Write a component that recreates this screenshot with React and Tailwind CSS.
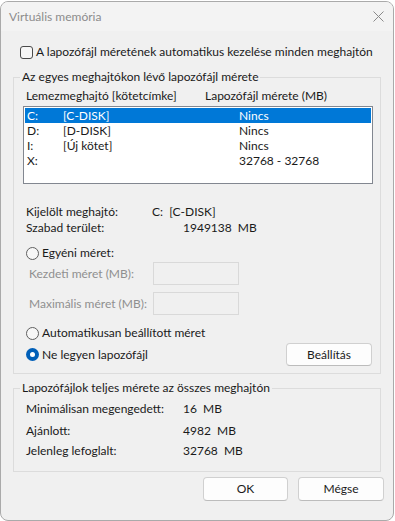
import React from "react";

function Radio({ checked }) {
  return checked ? (
    <span className="w-[13px] h-[13px] rounded-full bg-[#005fb8] flex items-center justify-center shrink-0">
      <span className="w-[5px] h-[5px] rounded-full bg-white" />
    </span>
  ) : (
    <span className="w-[13px] h-[13px] rounded-full border border-[#5f5f5f] bg-[#f7f7f7] shrink-0" />
  );
}

function Btn({ children, w }) {
  return (
    <div className={`h-[24px] ${w} rounded-[4px] border border-[#d0d0d0] border-b-[#bcbcbc] bg-[#fdfdfd] flex items-center justify-center text-[#1b1b1b]`}>
      {children}
    </div>
  );
}

export default function App() {
  const rows = [
    ["C:", "[C-DISK]", "Nincs", true],
    ["D:", "[D-DISK]", "Nincs", false],
    ["I:", "[Új kötet]", "Nincs", false],
    ["X:", "", "32768 - 32768", false],
  ];
  return (
    <div
      className="w-[395px] h-[521px] bg-white overflow-hidden text-[12px] leading-[16px] text-[#1a1a1a] whitespace-nowrap"
      style={{ fontFamily: 'Lato, "Noto Sans", sans-serif' }}
    >
      <div className="w-[394px] h-[520px] mt-[1px] rounded-[8px] border border-[#aaaaaa] bg-[#f0f0f0] overflow-hidden flex flex-col">
        <div className="h-[29px] bg-[#f3f3f3] flex items-center justify-between pl-[8px] pr-[9px]">
          <span className="text-[#8c8c8c]">Virtuális memória</span>
          <svg width="11" height="11" viewBox="0 0 11 11" className="mb-[1px]">
            <path d="M0.5 0.5 L10.5 10.5 M10.5 0.5 L0.5 10.5" stroke="#8a8a8a" strokeWidth="1" />
          </svg>
        </div>
        <div className="flex items-center gap-[3px] ml-[19px] mt-[13px] h-[16px]">
          <span className="w-[13px] h-[13px] rounded-[3px] border border-[#4a4a4a] bg-[#f7f7f7]" />
          <span>A lapozófájl méretének automatikus kezelése minden meghajtón</span>
        </div>
        <fieldset className="ml-[12px] w-[368px] mt-[9px] border border-[#dcdcdc] pb-[7px]">
          <legend className="ml-[6px] px-[2px]">Az egyes meghajtókon lévő lapozófájl mérete</legend>
          <div className="flex ml-[12px] mt-[3px] h-[16px]">
            <span className="w-[179px]">Lemezmeghajtó [kötetcímke]</span>
            <span>Lapozófájl mérete (MB)</span>
          </div>
          <div className="ml-[9px] w-[350px] h-[78px] mt-[2px] border border-[#828790] bg-white p-[1px] leading-[15px]">
            {rows.map(([d, l, s, sel]) => (
              <div
                key={d}
                className={`h-[15px] flex items-center ${sel ? "bg-[#0078d7] text-white" : ""}`}
              >
                <span className="w-[38px] pl-[2px]">{d}</span>
                <span className="w-[176px]">{l}</span>
                <span>{s}</span>
              </div>
            ))}
          </div>
          <div className="flex ml-[12px] mt-[20px] h-[16px]">
            <span className="w-[126px]">Kijelölt meghajtó:</span>
            <span>C:&nbsp; [C-DISK]</span>
          </div>
          <div className="flex ml-[12px] h-[16px]">
            <span className="w-[157px]">Szabad terület:</span>
            <span>1949138&nbsp; MB</span>
          </div>
          <div className="flex items-center gap-[3px] ml-[12px] mt-[9px] h-[16px]">
            <Radio />
            <span>Egyéni méret:</span>
          </div>
          <div className="flex items-center ml-[15px] mt-[1px] h-[23px]">
            <span className="w-[124px] text-[#8f8f8f]">Kezdeti méret (MB):</span>
            <span className="w-[86px] h-[23px] border border-[#d9d9d9] bg-[#f0f0f0]" />
          </div>
          <div className="flex items-center ml-[15px] mt-[7px] h-[23px]">
            <span className="w-[124px] text-[#8f8f8f]">Maximális méret (MB):</span>
            <span className="w-[86px] h-[23px] border border-[#d9d9d9] bg-[#f0f0f0]" />
          </div>
          <div className="flex items-center gap-[3px] ml-[12px] mt-[10px] h-[16px]">
            <Radio />
            <span>Automatikusan beállított méret</span>
          </div>
          <div className="flex items-center justify-between ml-[12px] mr-[8px] mt-[2px] h-[23px]">
            <div className="flex items-center gap-[3px]">
              <Radio checked />
              <span>Ne legyen lapozófájl</span>
            </div>
            <div className="h-[23px] w-[86px] rounded-[4px] border border-[#d0d0d0] border-b-[#bcbcbc] bg-[#fdfdfd] flex items-center justify-center text-[#1b1b1b]">
              Beállítás
            </div>
          </div>
        </fieldset>
        <fieldset className="ml-[12px] w-[368px] mt-[6px] border border-[#dcdcdc] h-[92px]">
          <legend className="ml-[6px] px-[2px]">Lapozófájlok teljes mérete az összes meghajtón</legend>
          <div className="flex flex-col ml-[12px] mt-[5px]">
            <div className="flex h-[16px]">
              <span className="w-[157px]">Minimálisan megengedett:</span>
              <span>16&nbsp; MB</span>
            </div>
            <div className="flex h-[16px] mt-[6px]">
              <span className="w-[157px]">Ajánlott:</span>
              <span>4982&nbsp; MB</span>
            </div>
            <div className="flex h-[16px] mt-[4px]">
              <span className="w-[157px]">Jelenleg lefoglalt:</span>
              <span>32768&nbsp; MB</span>
            </div>
          </div>
        </fieldset>
        <div className="flex justify-end gap-[10px] mr-[9px] mt-[5px]">
          <Btn w="w-[85px]">OK</Btn>
          <Btn w="w-[86px]">Mégse</Btn>
        </div>
      </div>
    </div>
  );
}
